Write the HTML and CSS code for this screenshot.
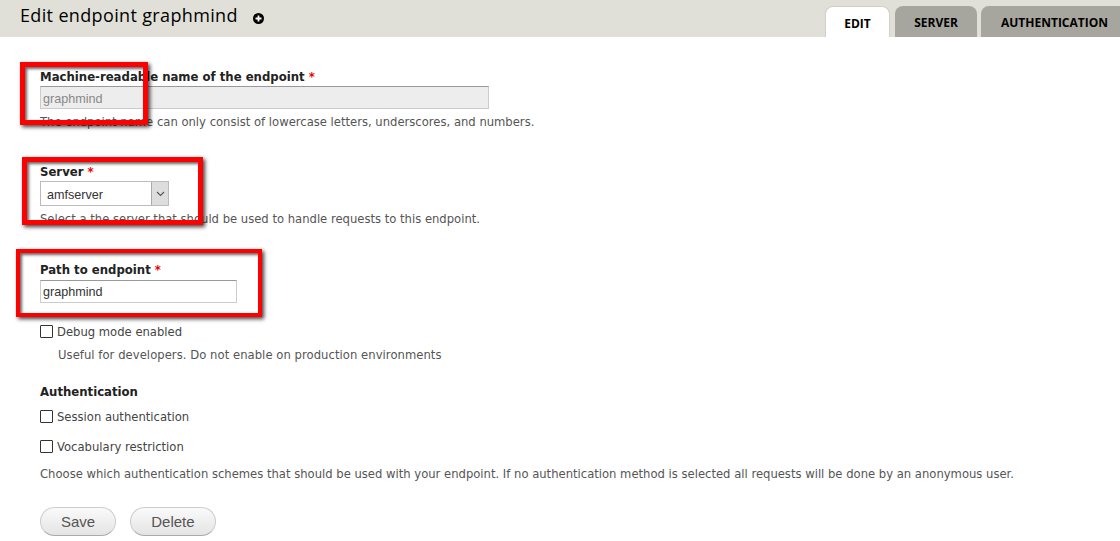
FILE: index.html

```html
<!DOCTYPE html>
<html lang="en">
<head>
    <meta charset="UTF-8">
    <title>Edit endpoint graphmind</title>
    <link rel="stylesheet" href="styles.css">
</head>
<body>
    <div class="header">
        <h1>Edit endpoint graphmind</h1>
        <svg class="add-icon" width="11" height="11" viewBox="0 0 11 11">
            <circle cx="5.5" cy="5.5" r="5.5" fill="#000"/>
            <path d="M5.5 2.5v6M2.5 5.5h6" stroke="#fff" stroke-width="1.8"/>
        </svg>
        <div class="tabs">
            <a class="tab active" href="#">EDIT</a>
            <a class="tab" href="#">SERVER</a>
            <a class="tab tab-auth" href="#">AUTHENTICATION</a>
        </div>
    </div>
    <form class="content">
        <div class="field field-name">
            <label>Machine-readable name of the endpoint <span class="req">*</span></label>
            <input class="text wide" type="text" value="graphmind" disabled>
            <p class="desc">The endpoint name can only consist of lowercase letters, underscores, and numbers.</p>
        </div>
        <div class="field field-server">
            <label>Server <span class="req">*</span></label>
            <div class="select">
                <span class="select-value">amfserver</span>
                <span class="select-btn">
                    <svg width="9" height="6" viewBox="0 0 9 6"><path d="M1 1l3.500 3.500L8 1" fill="none" stroke="#555" stroke-width="1.100"/></svg>
                </span>
            </div>
            <p class="desc">Select a the server that should be used to handle requests to this endpoint.</p>
        </div>
        <div class="field field-path">
            <label>Path to endpoint <span class="req">*</span></label>
            <input class="text" type="text" value="graphmind">
        </div>
        <div class="check check-debug"><span class="box"></span>Debug mode enabled</div>
        <p class="desc indent">Useful for developers. Do not enable on production environments</p>
        <h3>Authentication</h3>
        <div class="check"><span class="box"></span>Session authentication</div>
        <div class="check"><span class="box"></span>Vocabulary restriction</div>
        <p class="desc auth-desc">Choose which authentication schemes that should be used with your endpoint. If no authentication method is selected all requests will be done by an anonymous user.</p>
        <div class="actions">
            <button type="button">Save</button>
            <button type="button">Delete</button>
        </div>
    </form>
    <div class="mark mark-1"></div>
    <div class="mark mark-2"></div>
    <div class="mark mark-3"></div>
</body>
</html>
```

FILE: styles.css

```css
html, body {
    height: 541px;
    overflow: hidden;
}
body {
    background-color: #fff;
    color: #555;
    font-family: "DejaVu Sans", Verdana, sans-serif;
    font-size: 11.6px;
    margin: 0;
    position: relative;
}
.header {
    background-color: #e0e0d8;
    height: 37px;
    display: flex;
    align-items: flex-start;
    padding-left: 20px;
    position: relative;
}
h1 {
    margin: 3px 0 0;
    font-family: "Open Sans", sans-serif;
    font-size: 18px;
    font-weight: 400;
    line-height: 24px;
    letter-spacing: 0.35px;
    color: #000;
}
.add-icon {
    margin: 13px 0 0 15px;
}
.tabs {
    display: flex;
    gap: 5px;
    margin-left: auto;
    margin-right: -8px;
    padding-top: 6px;
}
.tab {
    height: 31px;
    line-height: 33px;
    width: 82px;
    text-align: center;
    background-color: #a6a69e;
    border-radius: 8px 8px 0 0;
    color: #000;
    font-family: "Open Sans", sans-serif;
    font-size: 12px;
    font-weight: 700;
    text-decoration: none;
}
.tab.active {
    width: 63px;
    height: 30px;
    background-color: #fff;
    border: 1px solid #d0d0c8;
    border-bottom: 0;
}
.tab-auth {
    width: 147px;
    margin-left: -1px;
}
.content {
    padding: 32px 0 0 40px;
}
label, h3 {
    display: block;
    color: #222;
    font-family: "DejaVu Sans Condensed", "DejaVu Sans", sans-serif;
    font-weight: 700;
    font-size: 13px;
    line-height: 15px;
    margin: 0;
}
.req {
    color: #e00;
}
.text {
    display: block;
    box-sizing: border-box;
    margin: 2px 0 0;
    width: 197px;
    height: 23px;
    padding: 0 2px;
    border: 1px solid #ccc;
    border-top-color: #999;
    background-color: #fff;
    color: #333;
    font-family: "Liberation Sans", sans-serif;
    font-size: 12.6px;
}
.text.wide {
    width: 449px;
    padding-top: 2px;
    background-color: #ededed;
    color: #888;
}
.desc {
    margin: 6px 0 0;
    line-height: 15px;
}
.field-server {
    margin-top: 34px;
}
.select {
    display: flex;
    box-sizing: border-box;
    width: 129px;
    height: 25px;
    margin-top: 2px;
    border: 1px solid #bbb;
    color: #333;
    font-family: "Liberation Sans", sans-serif;
    font-size: 12.6px;
    line-height: 25px;
}
.select-value {
    flex: 1;
    padding: 1px 0 0 6px;
}
.select-btn {
    width: 16px;
    background-color: #ddd;
    border-left: 1px solid #aaa;
    display: flex;
    align-items: center;
    justify-content: center;
}
.field-path {
    margin-top: 35px;
}
.field-path .text {
    margin-top: 3px;
}
.check {
    display: flex;
    align-items: center;
    height: 15px;
    color: #444;
    margin-bottom: 15px;
}
.check-debug {
    margin-top: 21px;
    margin-bottom: 0;
}
.box {
    box-sizing: border-box;
    width: 13px;
    height: 13px;
    margin-right: 4px;
    border: 1px solid #333;
    background-color: #fff;
    border-radius: 1px;
}
.indent {
    margin: 9px 0 0 18px;
    letter-spacing: 0.05px;
}
h3 {
    margin: 21px 0 10px;
}
.auth-desc {
    margin-top: -2px;
}
.actions {
    display: flex;
    gap: 14px;
    margin-top: 25px;
}
button {
    height: 29px;
    padding: 0 20px;
    border: 1px solid #ccc;
    border-bottom-color: #aaa;
    border-radius: 15px;
    background: linear-gradient(#fafafa, #e4e4e4);
    color: #555;
    font-family: "Liberation Sans", sans-serif;
    font-size: 15px;
}
.mark {
    position: absolute;
    box-sizing: border-box;
    border: 5px solid #f00;
    box-shadow: 2px 2px 4px rgba(0, 0, 0, 0.75), inset 2px 2px 3px rgba(0, 0, 0, 0.6);
}
.mark-1 {
    left: 20px;
    top: 62px;
    width: 128px;
    height: 63px;
}
.mark-2 {
    left: 22px;
    top: 157px;
    width: 181px;
    height: 68px;
}
.mark-3 {
    left: 16px;
    top: 249px;
    width: 246px;
    height: 68px;
    border-width: 4px;
}
```
